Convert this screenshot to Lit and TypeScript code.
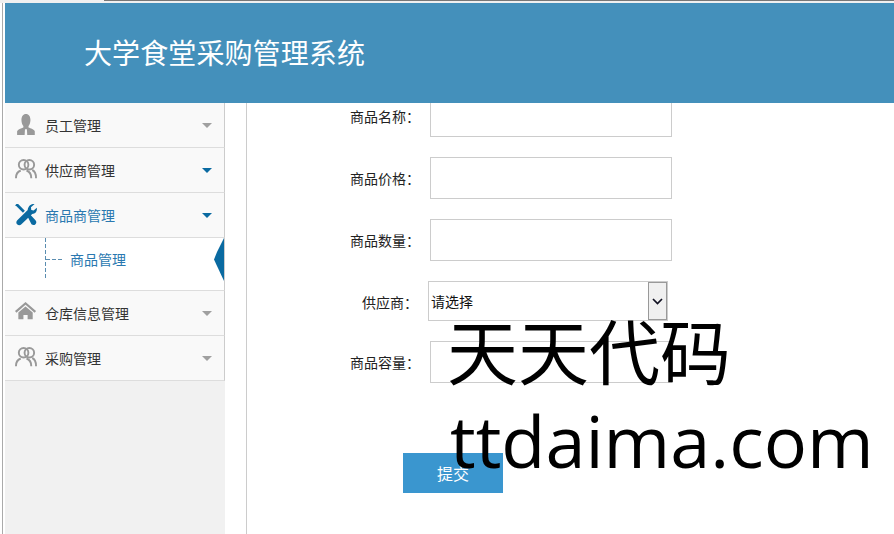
import { LitElement, html, css, svg } from "lit";
import { customElement } from "lit/decorators.js";

const icons: Record<string, unknown> = {
  person: svg`<g transform="translate(2.200 0) scale(.84 1)"><path fill="#999" d="M11 0c3.600 0 5.600 2.800 5.600 6.200 0 2.600-1 5-2.400 6.300v1.700c2.800 1 7 1.800 7.800 3.800v4H0v-4c.8-2 5-2.800 7.800-3.800v-1.700C6.400 11.200 5.400 8.800 5.400 6.200 5.400 2.800 7.400 0 11 0z"/><path fill="#f9f9f9" d="M9.800 16h2.400l.4 6h-3.200z"/></g>`,
  users: svg`<g fill="none" stroke="#999" stroke-width="2"><circle cx="15" cy="6" r="5"/><circle cx="9" cy="6" r="5"/><path d="M1 20c0-4.500 2-7 5-8M12 12c3 1 5 3.500 5 8M18 11.500c2.500 1 4 4 4 8.500"/></g>`,
  tools: svg`<g fill="#0a6aa1"><path d="M20.500 0l-3.800 3.400.3 2.800 2.500.6L22.800 4c.6 3-1 6.300-4.800 6.500L6.700 21.300c-1.300 1.300-3.300 1.200-4.500 0-1.200-1.300-1-3 .2-4.200L13.300 6.200C13.400 2.800 16.800-.6 20.500 0z"/><path d="M3.300 0l7 7-2 2.200-7-7L0 1.500 1.500 0zM13 12.800l2.400-2.300 6 6.400c1.200 1.300 1.200 3 0 4.200-1.200 1.200-3 1.100-4.200 0z"/></g>`,
  home: svg`<g fill="#999"><path d="M11 0l11 9.500-1.500 1.700L11 3 1.500 11.200 0 9.500z"/><path d="M3.500 11L11 4.800l7.500 6.200v7h-5.300v-4.500H8.800V18H3.500z"/></g>`,
};

type Item = { icon: string; label: string; open?: boolean; active?: boolean };
const menu: Item[] = [
  { icon: "person", label: "员工管理" },
  { icon: "users", label: "供应商管理", open: true },
  { icon: "tools", label: "商品商管理", open: true, active: true },
  { icon: "home", label: "仓库信息管理" },
  { icon: "users", label: "采购管理" },
];

@customElement("app-root")
export class AppRoot extends LitElement {
  static styles = css`
    :host {
      display: block;
      width: 894px;
      height: 534px;
      overflow: hidden;
      position: relative;
      background: #fff;
      font-family: "Liberation Sans", "Noto Sans CJK SC", sans-serif;
      font-size: 14px;
      color: #222;
    }
    .strip { height: 3px; background: #f0f0f0; display: flex; padding-left: 104px; }
    .strip i { flex: 1; height: 1px; background: #777; }
    .page { height: 531px; margin-left: 2px; border-left: 1px solid #aaa; padding-left: 2px; display: flex; flex-direction: column; }
    .head {
      height: 100px; flex: none; background: #4490bb; color: #fff;
      font-size: 28px; letter-spacing: 0.1px; line-height: 98px; padding-left: 79px;
      font-family: "Noto Sans CJK SC", sans-serif;
      position: relative; z-index: 1;
    }
    .cols { flex: 1; display: flex; min-height: 0; }
    .side { width: 220px; flex: none; background: #f1f1f1; }
    .item {
      height: 44px; box-sizing: content-box; display: flex; align-items: center;
      background: #f9f9f9; border-bottom: 1px solid #ddd; border-right: 1px solid #ccc;
      padding-left: 10px; padding-right: 12px; color: #333;
      font-family: "Noto Sans CJK SC", sans-serif;
    }
    .item svg.ic { width: 22px; height: 22px; flex: none; margin-right: 8px; }
    .item span { flex: 1; }
    .item.active span { color: #2a78b0; }
    .tri { width: 0; height: 0; border-left: 5px solid transparent; border-right: 5px solid transparent; border-top: 5px solid #a0a0a0; }
    .tri.open { border-top-color: #0a6aa1; }
    .sub {
      background: #fff; border-bottom: 1px solid #ddd; border-right: 1px solid #ccc;
      position: relative; display: flex; align-items: flex-start;
      padding: 12px 0 0 65px; box-sizing: border-box; height: 53px;
      color: #2a78b0; font-family: "Noto Sans CJK SC", sans-serif; line-height: 18px;
    }
    .tree { position: absolute; left: 40px; top: 0; }
    .notch { position: absolute; right: 0; top: 0; }
    .main {
      margin-left: 21px; flex: 1; border-left: 1px solid #ccc; display: flex; flex-direction: column; gap: 20px;
      padding-top: 0; overflow: hidden;
    }
    .form { margin-top: -8px; display: flex; flex-direction: column; gap: 20px; }
    .row { display: flex; align-items: center; gap: 10px; }
    .row label { width: 173px; text-align: right; color: #222; font-family: "Noto Sans CJK SC", sans-serif; flex: none; }
    .row input { width: 242px; height: 42px; box-sizing: border-box; border: 1px solid #ccc; background: #fff; padding: 0; margin: 0; outline: none; }
    .row.pick label { width: 171px; padding-top: 2px; }
    .select { width: 240px; height: 40px; box-sizing: border-box; border: 1px solid #ccc; display: flex; align-items: center; justify-content: space-between; padding: 0 0 0 2px; font-family: "Noto Sans CJK SC", sans-serif; color: #111; }
    .select b { width: 19px; height: 38px; box-sizing: border-box; border: 1px solid #999; background: #f0f0f0; display: flex; align-items: center; justify-content: center; }
    .submit { margin: 50px 0 0 156px; width: 100px; height: 40px; border: 0; background: #3a96cf; color: #fff; font-size: 16px; font-family: "Noto Sans CJK SC", sans-serif; padding: 0; }
    .mark {
      position: absolute; left: 447px; top: 300px; color: #000; pointer-events: none;
      white-space: nowrap;
    }
    .mark div:first-child { font-size: 71px; line-height: 96px; font-family: "Noto Sans CJK SC", sans-serif; }
    .mark div:last-child { font-size: 72px; line-height: 88px; margin-left: 3px; font-family: "Open Sans", sans-serif; }
  `;

  private renderItem(m: Item) {
    return html`<div class="item ${m.active ? "active" : ""}">
      <svg class="ic" viewBox="0 0 23 23">${icons[m.icon]}</svg>
      <span>${m.label}</span>
      <i class="tri ${m.open ? "open" : ""}"></i>
    </div>`;
  }

  render() {
    return html`
      <div class="strip"><i></i></div>
      <div class="page">
        <div class="head">大学食堂采购管理系统</div>
        <div class="cols">
          <nav class="side">
            ${menu.slice(0, 3).map((m) => this.renderItem(m))}
            <div class="sub">
              <svg class="tree" width="24" height="44"><path d="M.5 0V42M1 21.500H19" fill="none" stroke="#5a8db0" stroke-dasharray="4 2"/></svg>
              商品管理
              <svg class="notch" width="10" height="43"><path d="M10 0V43L0 21.500 3 14z" fill="#0a6aa1"/></svg>
            </div>
            ${menu.slice(3).map((m) => this.renderItem(m))}
          </nav>
          <main class="main">
            <form class="form">
              <div class="row"><label>商品名称：</label><input /></div>
              <div class="row"><label>商品价格：</label><input /></div>
              <div class="row"><label>商品数量：</label><input /></div>
              <div class="row pick"><label>供应商：</label>
                <div class="select">请选择<b><svg width="11" height="7" viewBox="0 0 11 7"><path d="M1 1l4.500 4.500L10 1" fill="none" stroke="#112" stroke-width="1.700"/></svg></b></div>
              </div>
              <div class="row"><label>商品容量：</label><input /></div>
              <button class="submit" type="button">提交</button>
            </form>
          </main>
        </div>
      </div>
      <div class="mark"><div>天天代码</div><div>ttdaima.com</div></div>
    `;
  }
}
